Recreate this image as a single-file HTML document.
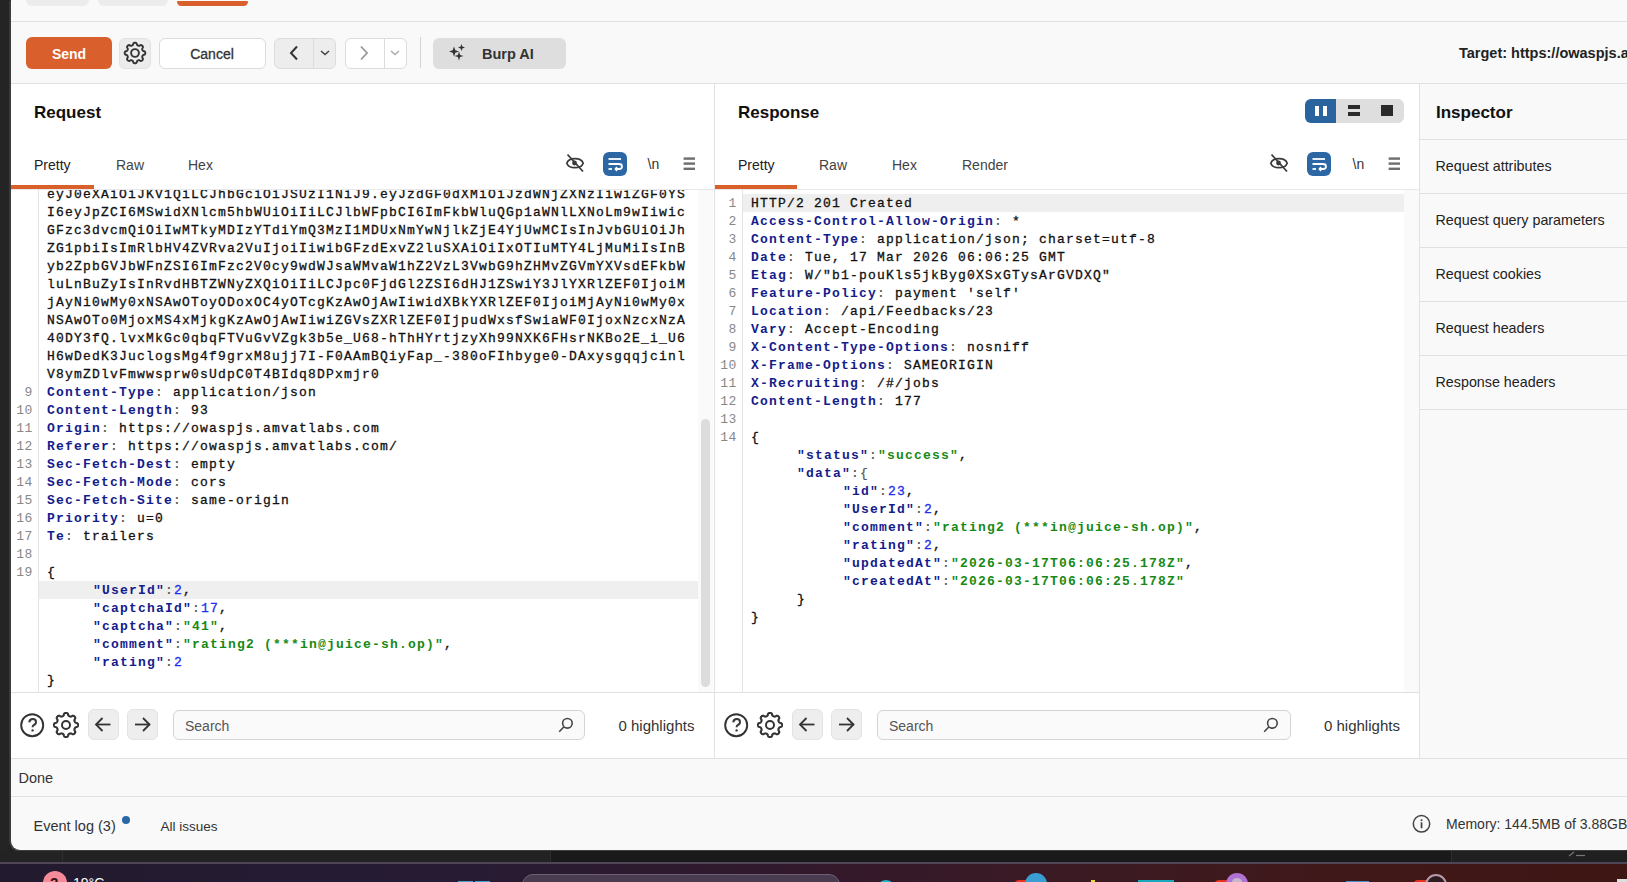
<!DOCTYPE html>
<html><head><meta charset="utf-8">
<style>
*{box-sizing:border-box;margin:0;padding:0}
html,body{width:1627px;height:882px;overflow:hidden;background:#1f1f1f;font-family:"Liberation Sans",sans-serif;color:#222}
.a{position:absolute;white-space:nowrap}
#win{position:absolute;left:11px;top:0;width:1616px;height:850px;background:#f9f9f9;border-bottom-left-radius:9px;overflow:hidden;box-shadow:-1.5px 0.8px 0 0.3px #3e3e3e;z-index:2}
.hl{position:absolute;height:1px;background:#e0e0e0}
.vl{position:absolute;width:1px;background:#e0e0e0}
.btn{position:absolute;border-radius:6px}
.t14{font-size:14px;line-height:14px}
.ed{position:absolute;top:190px;height:502px;background:#fff;overflow:hidden}
.ed .row,.ed .ln{position:absolute;font-family:"Liberation Mono",monospace;font-size:13px;letter-spacing:1.2px;line-height:18px;white-space:pre;height:18px;padding-top:1px}
.ed .row{left:36px;color:#111;-webkit-text-stroke:0.3px #111}
.ed .ln{left:0;width:22px;text-align:right;color:#888;font-size:13px;letter-spacing:0.6px}
.ed .gut{position:absolute;left:27px;top:0;width:1px;height:502px;background:#e4e4e4}
.ed .hlrow{position:absolute;left:28px;height:18px;background:#efefef}
.k{color:#141c8c;font-weight:bold;-webkit-text-stroke:0}
.jk{color:#141c8c;font-weight:bold;-webkit-text-stroke:0}
.c{color:#555;-webkit-text-stroke:0.2px #555}
.s{color:#168a16;font-weight:bold;-webkit-text-stroke:0}
.n{color:#2030ee;-webkit-text-stroke:0.3px #2030ee}
.v{color:#111}
.ind{display:inline-block;width:46px}
.tab{position:absolute;top:157.85px;font-size:14px;line-height:14px;color:#444}
.ph{position:absolute;top:104.2px;font-size:17px;line-height:17px;font-weight:bold;color:#111}
.ins{position:absolute;left:1424.5px;font-size:14.3px;line-height:14px;color:#222}
</style></head><body>
<div id="win">
  <!-- top tabs -->
  <div class="a" style="left:15px;top:-10px;width:63px;height:16px;background:#ececec;border-radius:6px"></div>
  <div class="a" style="left:87.3px;top:-10px;width:70.2px;height:16px;background:#ececec;border-radius:6px"></div>
  <div class="a" style="left:166.3px;top:1.3px;width:70.8px;height:4.8px;background:#d95f2b;border-radius:1px 1px 5px 5px"></div>
  <div class="hl" style="left:0;top:21px;width:1616px"></div>

  <!-- toolbar -->
  <div class="btn" style="left:15px;top:37px;width:86px;height:32px;background:#d9602c"></div>
  <div class="a" style="left:15px;top:47px;width:86px;text-align:center;font-size:14px;line-height:14px;font-weight:bold;color:#fff">Send</div>
  <div class="btn" style="left:108px;top:37.6px;width:32px;height:31.2px;background:#ececec;border:1px solid #e2e2e2"></div>
  <svg class="a" style="left:112px;top:41px" width="24" height="24" viewBox="0 0 24 24"><path d="M12.00,1.70 L12.34,1.72 L12.67,1.79 L12.99,1.91 L13.30,2.09 L13.59,2.35 L13.79,3.03 L13.94,3.70 L14.15,3.97 L14.37,4.19 L14.59,4.36 L14.82,4.50 L15.06,4.61 L15.31,4.70 L15.57,4.76 L15.85,4.80 L16.15,4.80 L16.50,4.76 L17.08,4.39 L17.69,4.05 L18.08,4.07 L18.43,4.17 L18.74,4.31 L19.03,4.50 L19.28,4.72 L19.50,4.97 L19.69,5.26 L19.83,5.57 L19.93,5.92 L19.95,6.31 L19.61,6.92 L19.24,7.50 L19.20,7.85 L19.20,8.15 L19.24,8.43 L19.30,8.69 L19.39,8.94 L19.50,9.18 L19.64,9.41 L19.81,9.63 L20.03,9.85 L20.30,10.06 L20.97,10.21 L21.65,10.41 L21.91,10.70 L22.09,11.01 L22.21,11.33 L22.28,11.66 L22.30,12.00 L22.28,12.34 L22.21,12.67 L22.09,12.99 L21.91,13.30 L21.65,13.59 L20.97,13.79 L20.30,13.94 L20.03,14.15 L19.81,14.37 L19.64,14.59 L19.50,14.82 L19.39,15.06 L19.30,15.31 L19.24,15.57 L19.20,15.85 L19.20,16.15 L19.24,16.50 L19.61,17.08 L19.95,17.69 L19.93,18.08 L19.83,18.43 L19.69,18.74 L19.50,19.03 L19.28,19.28 L19.03,19.50 L18.74,19.69 L18.43,19.83 L18.08,19.93 L17.69,19.95 L17.08,19.61 L16.50,19.24 L16.15,19.20 L15.85,19.20 L15.57,19.24 L15.31,19.30 L15.06,19.39 L14.82,19.50 L14.59,19.64 L14.37,19.81 L14.15,20.03 L13.94,20.30 L13.79,20.97 L13.59,21.65 L13.30,21.91 L12.99,22.09 L12.67,22.21 L12.34,22.28 L12.00,22.30 L11.66,22.28 L11.33,22.21 L11.01,22.09 L10.70,21.91 L10.41,21.65 L10.21,20.97 L10.06,20.30 L9.85,20.03 L9.63,19.81 L9.41,19.64 L9.18,19.50 L8.94,19.39 L8.69,19.30 L8.43,19.24 L8.15,19.20 L7.85,19.20 L7.50,19.24 L6.92,19.61 L6.31,19.95 L5.92,19.93 L5.57,19.83 L5.26,19.69 L4.97,19.50 L4.72,19.28 L4.50,19.03 L4.31,18.74 L4.17,18.43 L4.07,18.08 L4.05,17.69 L4.39,17.08 L4.76,16.50 L4.80,16.15 L4.80,15.85 L4.76,15.57 L4.70,15.31 L4.61,15.06 L4.50,14.82 L4.36,14.59 L4.19,14.37 L3.97,14.15 L3.70,13.94 L3.03,13.79 L2.35,13.59 L2.09,13.30 L1.91,12.99 L1.79,12.67 L1.72,12.34 L1.70,12.00 L1.72,11.66 L1.79,11.33 L1.91,11.01 L2.09,10.70 L2.35,10.41 L3.03,10.21 L3.70,10.06 L3.97,9.85 L4.19,9.63 L4.36,9.41 L4.50,9.18 L4.61,8.94 L4.70,8.69 L4.76,8.43 L4.80,8.15 L4.80,7.85 L4.76,7.50 L4.39,6.92 L4.05,6.31 L4.07,5.92 L4.17,5.57 L4.31,5.26 L4.50,4.97 L4.72,4.72 L4.97,4.50 L5.26,4.31 L5.57,4.17 L5.92,4.07 L6.31,4.05 L6.92,4.39 L7.50,4.76 L7.85,4.80 L8.15,4.80 L8.43,4.76 L8.69,4.70 L8.94,4.61 L9.18,4.50 L9.41,4.36 L9.63,4.19 L9.85,3.97 L10.06,3.70 L10.21,3.03 L10.41,2.35 L10.70,2.09 L11.01,1.91 L11.33,1.79 L11.66,1.72Z" fill="none" stroke="#333" stroke-width="1.9" stroke-linejoin="round"/><circle cx="12" cy="12" r="3.9" fill="none" stroke="#333" stroke-width="1.9"/></svg>
  <div class="btn" style="left:147.5px;top:37.6px;width:107px;height:31.2px;background:#fff;border:1px solid #dcdcdc"></div>
  <div class="a" style="left:147px;top:47px;width:108px;text-align:center;font-size:14px;line-height:14px;color:#333;-webkit-text-stroke:0.3px #333">Cancel</div>
  <div class="btn" style="left:263px;top:37.6px;width:62px;height:31.2px;background:#ededed;border:1px solid #dcdcdc"></div>
  <div class="vl" style="left:302px;top:38px;height:30px;background:#dcdcdc"></div>
  <svg class="a" style="left:263px;top:37px" width="62" height="32" viewBox="0 0 62 32"><path d="M23 9.5 L17 16 L23 22.5" fill="none" stroke="#333" stroke-width="2"/><path d="M47 14 L51 17.5 L55 14" fill="none" stroke="#444" stroke-width="1.6"/></svg>
  <div class="btn" style="left:333.5px;top:37.6px;width:62px;height:31.2px;background:#fff;border:1px solid #dcdcdc"></div>
  <div class="vl" style="left:373px;top:38px;height:30px;background:#dcdcdc"></div>
  <svg class="a" style="left:333px;top:37px" width="63" height="32" viewBox="0 0 63 32"><path d="M17 9.5 L23 16 L17 22.5" fill="none" stroke="#999" stroke-width="1.8"/><path d="M47 14 L51 17.5 L55 14" fill="none" stroke="#aaa" stroke-width="1.4"/></svg>
  <div class="vl" style="left:409px;top:37px;height:31px;background:#d4d4d4"></div>
  <div class="btn" style="left:422px;top:37.6px;width:133px;height:31.4px;background:#dedede"></div>
  <svg class="a" style="left:437px;top:43px" width="20" height="20" viewBox="0 0 20 20" fill="#333"><path d="M6 3.5 L7.3 7.2 L11 8.5 L7.3 9.8 L6 13.5 L4.7 9.8 L1 8.5 L4.7 7.2Z"/><path d="M13.5 1 L14.4 3.6 L17 4.5 L14.4 5.4 L13.5 8 L12.6 5.4 L10 4.5 L12.6 3.6Z"/><path d="M11 8.5 L12.1 11.9 L15.5 13 L12.1 14.1 L11 17.5 L9.9 14.1 L6.5 13 L9.9 11.9Z"/></svg>
  <div class="a" style="left:471px;top:46.7px;font-size:14.5px;line-height:14.5px;font-weight:bold;color:#333">Burp AI</div>
  <div class="a" style="left:1448px;top:46.4px;font-size:14.5px;line-height:14.5px;font-weight:bold;color:#222">Target: https://owaspjs.amvatlabs.com</div>
  <div class="hl" style="left:0;top:83px;width:1616px"></div>

  <!-- request pane -->
  <div class="a" style="left:0;top:84px;width:703px;height:674px;background:#fff"></div>
  <div class="ph" style="left:23px">Request</div>
  <div class="tab" style="left:23px;color:#222">Pretty</div>
  <div class="tab" style="left:105px">Raw</div>
  <div class="tab" style="left:177px">Hex</div>
  <div class="hl" style="left:0;top:189px;width:703px;background:#e8e8e8"></div>
  <div class="a" style="left:0;top:185px;width:83px;height:4px;background:#d95f2b"></div>
  <svg class="a" style="left:554px;top:153px" width="20" height="20" viewBox="0 0 20 20"><path d="M1.8 10.2 C4 4.2 16 4.2 18.2 10.2 C16 16.2 4 16.2 1.8 10.2Z" fill="none" stroke="#3a3a3a" stroke-width="1.7"/><circle cx="9.5" cy="10" r="2.4" fill="#3a3a3a"/><path d="M2.5 1.5 L18 18.5" stroke="#3a3a3a" stroke-width="1.8"/></svg>
  <div class="btn" style="left:591.5px;top:151.5px;width:24px;height:24px;background:#2b67a4;border-radius:6px"></div>
  <svg class="a" style="left:591.5px;top:151.5px" width="24" height="24" viewBox="0 0 24 24" fill="none" stroke="#fff" stroke-width="1.8"><path d="M5.5 7 H18"/><path d="M5.5 12 H16 Q19 12 19 14.5 Q19 17 16 17 H12.5"/><path d="M14 15 L12.3 17 L14 19" stroke-width="1.5"/><path d="M5.5 17 H9"/></svg>
  <div class="a" style="left:636.5px;top:157px;font-size:14px;line-height:14px;color:#333">\n</div>
  <svg class="a" style="left:672px;top:157px" width="12" height="13" viewBox="0 0 12 13" fill="#6e6e6e"><rect x="0.6" y="0.4" width="11.4" height="2.4"/><rect x="0.6" y="5.4" width="11.4" height="2.4"/><rect x="0.6" y="10.6" width="11.4" height="2.4"/></svg>
  <div class="ed" style="left:0;width:703px">
    <div class="gut"></div>
<div class="row" style="top:-5px">eyJ0eXAiOiJKV1QiLCJhbGciOiJSUzI1NiJ9.eyJzdGF0dXMiOiJzdWNjZXNzIiwiZGF0YS</div>
<div class="row" style="top:13px">I6eyJpZCI6MSwidXNlcm5hbWUiOiIiLCJlbWFpbCI6ImFkbWluQGp1aWNlLXNoLm9wIiwic</div>
<div class="row" style="top:31px">GFzc3dvcmQiOiIwMTkyMDIzYTdiYmQ3MzI1MDUxNmYwNjlkZjE4YjUwMCIsInJvbGUiOiJh</div>
<div class="row" style="top:49px">ZG1pbiIsImRlbHV4ZVRva2VuIjoiIiwibGFzdExvZ2luSXAiOiIxOTIuMTY4LjMuMiIsInB</div>
<div class="row" style="top:67px">yb2ZpbGVJbWFnZSI6ImFzc2V0cy9wdWJsaWMvaW1hZ2VzL3VwbG9hZHMvZGVmYXVsdEFkbW</div>
<div class="row" style="top:85px">luLnBuZyIsInRvdHBTZWNyZXQiOiIiLCJpc0FjdGl2ZSI6dHJ1ZSwiY3JlYXRlZEF0IjoiM</div>
<div class="row" style="top:103px">jAyNi0wMy0xNSAwOToyODoxOC4yOTcgKzAwOjAwIiwidXBkYXRlZEF0IjoiMjAyNi0wMy0x</div>
<div class="row" style="top:121px">NSAwOTo0MjoxMS4xMjkgKzAwOjAwIiwiZGVsZXRlZEF0IjpudWxsfSwiaWF0IjoxNzcxNzA</div>
<div class="row" style="top:139px">40DY3fQ.lvxMkGc0qbqFTVuGvVZgk3b5e_U68-hThHYrtjzyXh99NXK6FHsrNKBo2E_i_U6</div>
<div class="row" style="top:157px">H6wDedK3JuclogsMg4f9grxM8ujj7I-F0AAmBQiyFap_-380oFIhbyge0-DAxysgqqjcinl</div>
<div class="row" style="top:175px">V8ymZDlvFmwwsprw0sUdpC0T4BIdq8DPxmjr0</div>
<div class="ln" style="top:193px">9</div>
<div class="row" style="top:193px"><span class="k">Content-Type</span><span class="c">: </span>application/json</div>
<div class="ln" style="top:211px">10</div>
<div class="row" style="top:211px"><span class="k">Content-Length</span><span class="c">: </span>93</div>
<div class="ln" style="top:229px">11</div>
<div class="row" style="top:229px"><span class="k">Origin</span><span class="c">: </span>https://owaspjs.amvatlabs.com</div>
<div class="ln" style="top:247px">12</div>
<div class="row" style="top:247px"><span class="k">Referer</span><span class="c">: </span>https://owaspjs.amvatlabs.com/</div>
<div class="ln" style="top:265px">13</div>
<div class="row" style="top:265px"><span class="k">Sec-Fetch-Dest</span><span class="c">: </span>empty</div>
<div class="ln" style="top:283px">14</div>
<div class="row" style="top:283px"><span class="k">Sec-Fetch-Mode</span><span class="c">: </span>cors</div>
<div class="ln" style="top:301px">15</div>
<div class="row" style="top:301px"><span class="k">Sec-Fetch-Site</span><span class="c">: </span>same-origin</div>
<div class="ln" style="top:319px">16</div>
<div class="row" style="top:319px"><span class="k">Priority</span><span class="c">: </span>u=0</div>
<div class="ln" style="top:337px">17</div>
<div class="row" style="top:337px"><span class="k">Te</span><span class="c">: </span>trailers</div>
<div class="ln" style="top:355px">18</div>
<div class="ln" style="top:373px">19</div>
<div class="row" style="top:373px">{</div>
<div class="hlrow" style="top:391px;width:659px"></div>
<div class="row" style="top:391px"><span class="ind"></span><span class="jk">"UserId"</span><span class="c">:</span><span class="n">2</span>,</div>
<div class="row" style="top:409px"><span class="ind"></span><span class="jk">"captchaId"</span><span class="c">:</span><span class="n">17</span>,</div>
<div class="row" style="top:427px"><span class="ind"></span><span class="jk">"captcha"</span><span class="c">:</span><span class="s">"41"</span>,</div>
<div class="row" style="top:445px"><span class="ind"></span><span class="jk">"comment"</span><span class="c">:</span><span class="s">"rating2 (***in@juice-sh.op)"</span>,</div>
<div class="row" style="top:463px"><span class="ind"></span><span class="jk">"rating"</span><span class="c">:</span><span class="n">2</span></div>
<div class="row" style="top:481px">}</div>
    <div class="a" style="left:687px;top:0;width:15px;height:502px;background:#fafafa"></div>
    <div class="a" style="left:690px;top:229px;width:9px;height:268px;background:#dcdcdc;border-radius:5px"></div>
  </div>
  <div class="hl" style="left:0;top:692px;width:703px"></div>
  <div class="vl" style="left:703px;top:84px;height:674px;background:#e2e2e2"></div>

  <!-- response pane -->
  <div class="a" style="left:704px;top:84px;width:704px;height:674px;background:#fff"></div>
  <div class="ph" style="left:727px">Response</div>
  <div class="btn" style="left:1293.6px;top:99px;width:99.2px;height:24px;background:#dedede;border-radius:6px"></div>
  <div class="a" style="left:1293.6px;top:99px;width:31.6px;height:24px;background:#2a649e;border-radius:6px 0 0 6px"></div>
  <div class="a" style="left:1304px;top:105.6px;width:4.3px;height:10.4px;background:#fff"></div>
  <div class="a" style="left:1311.7px;top:105.6px;width:4.6px;height:10.4px;background:#fff"></div>
  <div class="a" style="left:1337.3px;top:105.4px;width:11.7px;height:3.6px;background:#2a2a2a"></div>
  <div class="a" style="left:1337.3px;top:112px;width:11.7px;height:3.8px;background:#2a2a2a"></div>
  <div class="a" style="left:1370px;top:105.4px;width:12.3px;height:10.4px;background:#2a2a2a"></div>
  <div class="tab" style="left:727px;color:#222">Pretty</div>
  <div class="tab" style="left:808px">Raw</div>
  <div class="tab" style="left:881px">Hex</div>
  <div class="tab" style="left:951px">Render</div>
  <div class="hl" style="left:704px;top:189px;width:704px;background:#e8e8e8"></div>
  <div class="a" style="left:704px;top:185px;width:82px;height:4px;background:#d95f2b"></div>
  <svg class="a" style="left:1258px;top:153px" width="20" height="20" viewBox="0 0 20 20"><path d="M1.8 10.2 C4 4.2 16 4.2 18.2 10.2 C16 16.2 4 16.2 1.8 10.2Z" fill="none" stroke="#3a3a3a" stroke-width="1.7"/><circle cx="9.5" cy="10" r="2.4" fill="#3a3a3a"/><path d="M2.5 1.5 L18 18.5" stroke="#3a3a3a" stroke-width="1.8"/></svg>
  <div class="btn" style="left:1296px;top:151.5px;width:24px;height:24px;background:#2b67a4;border-radius:6px"></div>
  <svg class="a" style="left:1296px;top:151.5px" width="24" height="24" viewBox="0 0 24 24" fill="none" stroke="#fff" stroke-width="1.8"><path d="M5.5 7 H18"/><path d="M5.5 12 H16 Q19 12 19 14.5 Q19 17 16 17 H12.5"/><path d="M14 15 L12.3 17 L14 19" stroke-width="1.5"/><path d="M5.5 17 H9"/></svg>
  <div class="a" style="left:1341.5px;top:157px;font-size:14px;line-height:14px;color:#333">\n</div>
  <svg class="a" style="left:1377px;top:157px" width="12" height="13" viewBox="0 0 12 13" fill="#6e6e6e"><rect x="0.6" y="0.4" width="11.4" height="2.4"/><rect x="0.6" y="5.4" width="11.4" height="2.4"/><rect x="0.6" y="10.6" width="11.4" height="2.4"/></svg>
  <div class="ed" style="left:704px;width:704px">
    <div class="gut"></div>
<div class="hlrow" style="top:4px;width:661px"></div>
<div class="ln" style="top:4px">1</div>
<div class="row" style="top:4px"><span class="v">HTTP/2 201 Created</span></div>
<div class="ln" style="top:22px">2</div>
<div class="row" style="top:22px"><span class="k">Access-Control-Allow-Origin</span><span class="c">: </span>*</div>
<div class="ln" style="top:40px">3</div>
<div class="row" style="top:40px"><span class="k">Content-Type</span><span class="c">: </span>application/json; charset=utf-8</div>
<div class="ln" style="top:58px">4</div>
<div class="row" style="top:58px"><span class="k">Date</span><span class="c">: </span>Tue, 17 Mar 2026 06:06:25 GMT</div>
<div class="ln" style="top:76px">5</div>
<div class="row" style="top:76px"><span class="k">Etag</span><span class="c">: </span>W/"b1-pouKls5jkByg0XSxGTysArGVDXQ"</div>
<div class="ln" style="top:94px">6</div>
<div class="row" style="top:94px"><span class="k">Feature-Policy</span><span class="c">: </span>payment 'self'</div>
<div class="ln" style="top:112px">7</div>
<div class="row" style="top:112px"><span class="k">Location</span><span class="c">: </span>/api/Feedbacks/23</div>
<div class="ln" style="top:130px">8</div>
<div class="row" style="top:130px"><span class="k">Vary</span><span class="c">: </span>Accept-Encoding</div>
<div class="ln" style="top:148px">9</div>
<div class="row" style="top:148px"><span class="k">X-Content-Type-Options</span><span class="c">: </span>nosniff</div>
<div class="ln" style="top:166px">10</div>
<div class="row" style="top:166px"><span class="k">X-Frame-Options</span><span class="c">: </span>SAMEORIGIN</div>
<div class="ln" style="top:184px">11</div>
<div class="row" style="top:184px"><span class="k">X-Recruiting</span><span class="c">: </span>/#/jobs</div>
<div class="ln" style="top:202px">12</div>
<div class="row" style="top:202px"><span class="k">Content-Length</span><span class="c">: </span>177</div>
<div class="ln" style="top:220px">13</div>
<div class="ln" style="top:238px">14</div>
<div class="row" style="top:238px">{</div>
<div class="row" style="top:256px"><span class="ind"></span><span class="jk">"status"</span><span class="c">:</span><span class="s">"success"</span>,</div>
<div class="row" style="top:274px"><span class="ind"></span><span class="jk">"data"</span><span class="c">:</span><span class="c">{</span></div>
<div class="row" style="top:292px"><span class="ind"></span><span class="ind"></span><span class="jk">"id"</span><span class="c">:</span><span class="n">23</span>,</div>
<div class="row" style="top:310px"><span class="ind"></span><span class="ind"></span><span class="jk">"UserId"</span><span class="c">:</span><span class="n">2</span>,</div>
<div class="row" style="top:328px"><span class="ind"></span><span class="ind"></span><span class="jk">"comment"</span><span class="c">:</span><span class="s">"rating2 (***in@juice-sh.op)"</span>,</div>
<div class="row" style="top:346px"><span class="ind"></span><span class="ind"></span><span class="jk">"rating"</span><span class="c">:</span><span class="n">2</span>,</div>
<div class="row" style="top:364px"><span class="ind"></span><span class="ind"></span><span class="jk">"updatedAt"</span><span class="c">:</span><span class="s">"2026-03-17T06:06:25.178Z"</span>,</div>
<div class="row" style="top:382px"><span class="ind"></span><span class="ind"></span><span class="jk">"createdAt"</span><span class="c">:</span><span class="s">"2026-03-17T06:06:25.178Z"</span></div>
<div class="row" style="top:400px"><span class="ind"></span>}</div>
<div class="row" style="top:418px">}</div>
    <div class="a" style="left:689px;top:0;width:15px;height:502px;background:#fafafa"></div>
  </div>
  <div class="hl" style="left:704px;top:692px;width:704px"></div>
  <div class="vl" style="left:1408px;top:84px;height:674px;background:#e2e2e2"></div>

  <!-- inspector -->
  <div class="a" style="left:1409px;top:84px;width:207px;height:674px;background:#f9f9f9"></div>
  <div class="ph" style="left:1425px">Inspector</div>
  <div class="hl" style="left:1409px;top:139px;width:207px"></div>
  <div class="ins" style="top:159px">Request attributes</div>
  <div class="hl" style="left:1409px;top:193px;width:207px"></div>
  <div class="ins" style="top:213px">Request query parameters</div>
  <div class="hl" style="left:1409px;top:247px;width:207px"></div>
  <div class="ins" style="top:267px">Request cookies</div>
  <div class="hl" style="left:1409px;top:301px;width:207px"></div>
  <div class="ins" style="top:321px">Request headers</div>
  <div class="hl" style="left:1409px;top:355px;width:207px"></div>
  <div class="ins" style="top:375px">Response headers</div>
  <div class="hl" style="left:1409px;top:409px;width:207px"></div>

  <!-- search rows -->
  <div class="a" style="left:0px;top:693px;width:703px;height:65px;background:#fff"></div>
  <svg class="a" style="left:8.6px;top:712.5px" width="26" height="26" viewBox="0 0 26 26"><circle cx="12.2" cy="12.2" r="11" fill="none" stroke="#333" stroke-width="1.9"/><path d="M9.2 9.4 Q9.6 6 12.8 6 Q16 6 16 9 Q16 11.2 13.6 12.2 Q12.6 12.7 12.6 14.3" fill="none" stroke="#383838" stroke-width="2"/><circle cx="12.6" cy="17.4" r="1.2" fill="#383838"/></svg>
  <svg class="a" style="left:42.3px;top:711.5px" width="26" height="26" viewBox="0 0 24 24"><path d="M12.00,1.70 L12.34,1.72 L12.67,1.79 L12.99,1.91 L13.30,2.09 L13.59,2.35 L13.79,3.03 L13.94,3.70 L14.15,3.97 L14.37,4.19 L14.59,4.36 L14.82,4.50 L15.06,4.61 L15.31,4.70 L15.57,4.76 L15.85,4.80 L16.15,4.80 L16.50,4.76 L17.08,4.39 L17.69,4.05 L18.08,4.07 L18.43,4.17 L18.74,4.31 L19.03,4.50 L19.28,4.72 L19.50,4.97 L19.69,5.26 L19.83,5.57 L19.93,5.92 L19.95,6.31 L19.61,6.92 L19.24,7.50 L19.20,7.85 L19.20,8.15 L19.24,8.43 L19.30,8.69 L19.39,8.94 L19.50,9.18 L19.64,9.41 L19.81,9.63 L20.03,9.85 L20.30,10.06 L20.97,10.21 L21.65,10.41 L21.91,10.70 L22.09,11.01 L22.21,11.33 L22.28,11.66 L22.30,12.00 L22.28,12.34 L22.21,12.67 L22.09,12.99 L21.91,13.30 L21.65,13.59 L20.97,13.79 L20.30,13.94 L20.03,14.15 L19.81,14.37 L19.64,14.59 L19.50,14.82 L19.39,15.06 L19.30,15.31 L19.24,15.57 L19.20,15.85 L19.20,16.15 L19.24,16.50 L19.61,17.08 L19.95,17.69 L19.93,18.08 L19.83,18.43 L19.69,18.74 L19.50,19.03 L19.28,19.28 L19.03,19.50 L18.74,19.69 L18.43,19.83 L18.08,19.93 L17.69,19.95 L17.08,19.61 L16.50,19.24 L16.15,19.20 L15.85,19.20 L15.57,19.24 L15.31,19.30 L15.06,19.39 L14.82,19.50 L14.59,19.64 L14.37,19.81 L14.15,20.03 L13.94,20.30 L13.79,20.97 L13.59,21.65 L13.30,21.91 L12.99,22.09 L12.67,22.21 L12.34,22.28 L12.00,22.30 L11.66,22.28 L11.33,22.21 L11.01,22.09 L10.70,21.91 L10.41,21.65 L10.21,20.97 L10.06,20.30 L9.85,20.03 L9.63,19.81 L9.41,19.64 L9.18,19.50 L8.94,19.39 L8.69,19.30 L8.43,19.24 L8.15,19.20 L7.85,19.20 L7.50,19.24 L6.92,19.61 L6.31,19.95 L5.92,19.93 L5.57,19.83 L5.26,19.69 L4.97,19.50 L4.72,19.28 L4.50,19.03 L4.31,18.74 L4.17,18.43 L4.07,18.08 L4.05,17.69 L4.39,17.08 L4.76,16.50 L4.80,16.15 L4.80,15.85 L4.76,15.57 L4.70,15.31 L4.61,15.06 L4.50,14.82 L4.36,14.59 L4.19,14.37 L3.97,14.15 L3.70,13.94 L3.03,13.79 L2.35,13.59 L2.09,13.30 L1.91,12.99 L1.79,12.67 L1.72,12.34 L1.70,12.00 L1.72,11.66 L1.79,11.33 L1.91,11.01 L2.09,10.70 L2.35,10.41 L3.03,10.21 L3.70,10.06 L3.97,9.85 L4.19,9.63 L4.36,9.41 L4.50,9.18 L4.61,8.94 L4.70,8.69 L4.76,8.43 L4.80,8.15 L4.80,7.85 L4.76,7.50 L4.39,6.92 L4.05,6.31 L4.07,5.92 L4.17,5.57 L4.31,5.26 L4.50,4.97 L4.72,4.72 L4.97,4.50 L5.26,4.31 L5.57,4.17 L5.92,4.07 L6.31,4.05 L6.92,4.39 L7.50,4.76 L7.85,4.80 L8.15,4.80 L8.43,4.76 L8.69,4.70 L8.94,4.61 L9.18,4.50 L9.41,4.36 L9.63,4.19 L9.85,3.97 L10.06,3.70 L10.21,3.03 L10.41,2.35 L10.70,2.09 L11.01,1.91 L11.33,1.79 L11.66,1.72Z" fill="none" stroke="#333" stroke-width="1.8" stroke-linejoin="round" transform="translate(12 12) scale(1.08) translate(-12 -12)"/><circle cx="12" cy="12" r="3.7" fill="none" stroke="#333" stroke-width="1.8"/></svg>
  <div class="btn" style="left:76.7px;top:709px;width:31px;height:31px;background:#eeeeee;border:1px solid #e3e3e3"></div>
  <svg class="a" style="left:76.7px;top:709px" width="31" height="31" viewBox="0 0 31 31" fill="none" stroke="#333" stroke-width="1.8"><path d="M8 15.5 H22.5"/><path d="M14.5 9 L8 15.5 L14.5 22"/></svg>
  <div class="btn" style="left:115.8px;top:709px;width:31px;height:31px;background:#eeeeee;border:1px solid #e3e3e3"></div>
  <svg class="a" style="left:115.8px;top:709px" width="31" height="31" viewBox="0 0 31 31" fill="none" stroke="#333" stroke-width="1.8"><path d="M8 15.5 H22.5"/><path d="M16 9 L22.5 15.5 L16 22"/></svg>
  <div class="btn" style="left:162.2px;top:710px;width:412px;height:30px;background:#fafafa;border:1px solid #d4d4d4;border-radius:6px"></div>
  <div class="a" style="left:174px;top:718.8px;font-size:14px;line-height:14px;color:#555">Search</div>
  <svg class="a" style="left:546.5px;top:717px" width="16" height="16" viewBox="0 0 16 16" fill="none" stroke="#444" stroke-width="1.6"><circle cx="9.4" cy="6.3" r="4.8"/><path d="M6 9.8 L1.2 14.8"/></svg>
  <div class="a" style="left:607.5px;top:717.7px;font-size:15px;line-height:15px;color:#333">0 highlights</div>
<div class="a" style="left:704px;top:693px;width:703px;height:65px;background:#fff"></div>
  <svg class="a" style="left:712.6px;top:712.5px" width="26" height="26" viewBox="0 0 26 26"><circle cx="12.2" cy="12.2" r="11" fill="none" stroke="#333" stroke-width="1.9"/><path d="M9.2 9.4 Q9.6 6 12.8 6 Q16 6 16 9 Q16 11.2 13.6 12.2 Q12.6 12.7 12.6 14.3" fill="none" stroke="#383838" stroke-width="2"/><circle cx="12.6" cy="17.4" r="1.2" fill="#383838"/></svg>
  <svg class="a" style="left:746.3px;top:711.5px" width="26" height="26" viewBox="0 0 24 24"><path d="M12.00,1.70 L12.34,1.72 L12.67,1.79 L12.99,1.91 L13.30,2.09 L13.59,2.35 L13.79,3.03 L13.94,3.70 L14.15,3.97 L14.37,4.19 L14.59,4.36 L14.82,4.50 L15.06,4.61 L15.31,4.70 L15.57,4.76 L15.85,4.80 L16.15,4.80 L16.50,4.76 L17.08,4.39 L17.69,4.05 L18.08,4.07 L18.43,4.17 L18.74,4.31 L19.03,4.50 L19.28,4.72 L19.50,4.97 L19.69,5.26 L19.83,5.57 L19.93,5.92 L19.95,6.31 L19.61,6.92 L19.24,7.50 L19.20,7.85 L19.20,8.15 L19.24,8.43 L19.30,8.69 L19.39,8.94 L19.50,9.18 L19.64,9.41 L19.81,9.63 L20.03,9.85 L20.30,10.06 L20.97,10.21 L21.65,10.41 L21.91,10.70 L22.09,11.01 L22.21,11.33 L22.28,11.66 L22.30,12.00 L22.28,12.34 L22.21,12.67 L22.09,12.99 L21.91,13.30 L21.65,13.59 L20.97,13.79 L20.30,13.94 L20.03,14.15 L19.81,14.37 L19.64,14.59 L19.50,14.82 L19.39,15.06 L19.30,15.31 L19.24,15.57 L19.20,15.85 L19.20,16.15 L19.24,16.50 L19.61,17.08 L19.95,17.69 L19.93,18.08 L19.83,18.43 L19.69,18.74 L19.50,19.03 L19.28,19.28 L19.03,19.50 L18.74,19.69 L18.43,19.83 L18.08,19.93 L17.69,19.95 L17.08,19.61 L16.50,19.24 L16.15,19.20 L15.85,19.20 L15.57,19.24 L15.31,19.30 L15.06,19.39 L14.82,19.50 L14.59,19.64 L14.37,19.81 L14.15,20.03 L13.94,20.30 L13.79,20.97 L13.59,21.65 L13.30,21.91 L12.99,22.09 L12.67,22.21 L12.34,22.28 L12.00,22.30 L11.66,22.28 L11.33,22.21 L11.01,22.09 L10.70,21.91 L10.41,21.65 L10.21,20.97 L10.06,20.30 L9.85,20.03 L9.63,19.81 L9.41,19.64 L9.18,19.50 L8.94,19.39 L8.69,19.30 L8.43,19.24 L8.15,19.20 L7.85,19.20 L7.50,19.24 L6.92,19.61 L6.31,19.95 L5.92,19.93 L5.57,19.83 L5.26,19.69 L4.97,19.50 L4.72,19.28 L4.50,19.03 L4.31,18.74 L4.17,18.43 L4.07,18.08 L4.05,17.69 L4.39,17.08 L4.76,16.50 L4.80,16.15 L4.80,15.85 L4.76,15.57 L4.70,15.31 L4.61,15.06 L4.50,14.82 L4.36,14.59 L4.19,14.37 L3.97,14.15 L3.70,13.94 L3.03,13.79 L2.35,13.59 L2.09,13.30 L1.91,12.99 L1.79,12.67 L1.72,12.34 L1.70,12.00 L1.72,11.66 L1.79,11.33 L1.91,11.01 L2.09,10.70 L2.35,10.41 L3.03,10.21 L3.70,10.06 L3.97,9.85 L4.19,9.63 L4.36,9.41 L4.50,9.18 L4.61,8.94 L4.70,8.69 L4.76,8.43 L4.80,8.15 L4.80,7.85 L4.76,7.50 L4.39,6.92 L4.05,6.31 L4.07,5.92 L4.17,5.57 L4.31,5.26 L4.50,4.97 L4.72,4.72 L4.97,4.50 L5.26,4.31 L5.57,4.17 L5.92,4.07 L6.31,4.05 L6.92,4.39 L7.50,4.76 L7.85,4.80 L8.15,4.80 L8.43,4.76 L8.69,4.70 L8.94,4.61 L9.18,4.50 L9.41,4.36 L9.63,4.19 L9.85,3.97 L10.06,3.70 L10.21,3.03 L10.41,2.35 L10.70,2.09 L11.01,1.91 L11.33,1.79 L11.66,1.72Z" fill="none" stroke="#333" stroke-width="1.8" stroke-linejoin="round" transform="translate(12 12) scale(1.08) translate(-12 -12)"/><circle cx="12" cy="12" r="3.7" fill="none" stroke="#333" stroke-width="1.8"/></svg>
  <div class="btn" style="left:780.7px;top:709px;width:31px;height:31px;background:#eeeeee;border:1px solid #e3e3e3"></div>
  <svg class="a" style="left:780.7px;top:709px" width="31" height="31" viewBox="0 0 31 31" fill="none" stroke="#333" stroke-width="1.8"><path d="M8 15.5 H22.5"/><path d="M14.5 9 L8 15.5 L14.5 22"/></svg>
  <div class="btn" style="left:819.8px;top:709px;width:31px;height:31px;background:#eeeeee;border:1px solid #e3e3e3"></div>
  <svg class="a" style="left:819.8px;top:709px" width="31" height="31" viewBox="0 0 31 31" fill="none" stroke="#333" stroke-width="1.8"><path d="M8 15.5 H22.5"/><path d="M16 9 L22.5 15.5 L16 22"/></svg>
  <div class="btn" style="left:866.2px;top:710px;width:413.5px;height:30px;background:#fafafa;border:1px solid #d4d4d4;border-radius:6px"></div>
  <div class="a" style="left:878px;top:718.8px;font-size:14px;line-height:14px;color:#555">Search</div>
  <svg class="a" style="left:1252px;top:717px" width="16" height="16" viewBox="0 0 16 16" fill="none" stroke="#444" stroke-width="1.6"><circle cx="9.4" cy="6.3" r="4.8"/><path d="M6 9.8 L1.2 14.8"/></svg>
  <div class="a" style="left:1313px;top:717.7px;font-size:15px;line-height:15px;color:#333">0 highlights</div>


  <div class="hl" style="left:0;top:758px;width:1616px"></div>
  <div class="a" style="left:7.5px;top:771.3px;font-size:14.5px;line-height:14.5px;color:#333">Done</div>
  <div class="hl" style="left:0;top:796px;width:1616px"></div>
  <div class="a" style="left:22.5px;top:818.7px;font-size:14.5px;line-height:14.5px;color:#333">Event log (3)</div>
  <div class="a" style="left:110.5px;top:815.5px;width:8px;height:8px;border-radius:50%;background:#2a67a6"></div>
  <div class="a" style="left:149.5px;top:819.6px;font-size:13.5px;line-height:13.5px;color:#333">All issues</div>
  <svg class="a" style="left:1400px;top:814px" width="20" height="20" viewBox="0 0 20 20"><circle cx="10.5" cy="9.8" r="8.2" fill="none" stroke="#444" stroke-width="1.5"/><rect x="9.7" y="8.3" width="1.7" height="6" fill="#444"/><rect x="9.7" y="5.3" width="1.7" height="1.8" fill="#444"/></svg>
  <div class="a" style="left:1435px;top:817.3px;font-size:14px;line-height:14px;color:#333">Memory: 144.5MB of 3.88GB</div>
</div>
<!-- below window -->
<div class="a" style="left:0;top:0;width:9px;height:862px;background:#242424"></div>
<div class="a" style="left:0;top:851px;width:62px;height:11px;background:#232323"></div>
<div class="a" style="left:62px;top:851px;width:1px;height:11px;background:#2e2e2e"></div>
<div class="a" style="left:63px;top:851px;width:487px;height:11px;background:#222"></div>
<div class="a" style="left:550px;top:851px;width:1px;height:11px;background:#2e2e2e"></div>
<div class="a" style="left:551px;top:851px;width:900px;height:11px;background:#1a1a1a"></div>
<div class="a" style="left:1451px;top:851px;width:1px;height:11px;background:#2e2e2e"></div>
<div class="a" style="left:1452px;top:851px;width:175px;height:11px;background:#202020"></div>
<svg class="a" style="left:1568px;top:849px" width="30" height="8" viewBox="0 0 30 8"><path d="M1 7 L6 3" stroke="#777" stroke-width="1.2"/><path d="M8 6.5 H17" stroke="#777" stroke-width="1.2"/></svg>
<!-- taskbar -->
<div class="a" style="left:0;top:862px;width:1627px;height:20px;background:linear-gradient(90deg,#221a2f 0%,#261b33 28%,#33192c 50%,#3c1a22 68%,#401818 85%,#3e1614 100%)"></div>
<div class="a" style="left:0;top:862px;width:1627px;height:1.5px;background:#4e4656"></div>
<div class="a" style="left:43px;top:871px;width:24px;height:24px;border-radius:50%;background:#f48a9a"></div>
<div class="a" style="left:50px;top:875px;font-size:15px;line-height:15px;color:#3a1010;font-weight:bold">2</div>
<div class="a" style="left:73px;top:876px;font-size:14px;line-height:14px;color:#fff">19°C</div>
<div class="a" style="left:457.7px;top:881px;width:15px;height:2px;background:#4a9cc8"></div>
<div class="a" style="left:474.7px;top:881px;width:15.3px;height:2px;background:#3aa0d0"></div>
<div class="a" style="left:522px;top:874px;width:318px;height:24px;border-radius:11px;background:#4a3c50;border:1px solid #6e6074"></div>
<div class="a" style="left:876px;top:880px;width:20px;height:20px;border-radius:50%;background:#22b6c8"></div>
<div class="a" style="left:1014px;top:880px;width:18px;height:8px;border-radius:5px 5px 0 0;background:#e8321e"></div>
<div class="a" style="left:1024.5px;top:873px;width:22px;height:22px;border-radius:50%;background:#3a9ed4"></div>
<div class="a" style="left:1091px;top:880px;width:4px;height:3px;background:#e8d830"></div>
<div class="a" style="left:1138px;top:880px;width:36px;height:3px;background:#18a8bc"></div>
<div class="a" style="left:1214px;top:880px;width:18px;height:6px;border-radius:5px 5px 0 0;background:#e8321e"></div>
<div class="a" style="left:1226px;top:873px;width:22px;height:22px;border-radius:50%;background:#b072d4"></div>
<div class="a" style="left:1232px;top:878px;width:10px;height:8px;border-radius:50%;background:#c8b8c8"></div>
<div class="a" style="left:1345.6px;top:881px;width:23.4px;height:2px;background:#4a90c8"></div>
<div class="a" style="left:1413px;top:880px;width:18px;height:6px;border-radius:5px 5px 0 0;background:#e8321e"></div>
<div class="a" style="left:1425px;top:873.5px;width:22px;height:22px;border-radius:50%;background:#2c1c20;border:2px solid #b89aa8"></div>
<div class="a" style="left:1617px;top:879px;width:10px;height:4px;background:#ddd"></div>
</body></html>
